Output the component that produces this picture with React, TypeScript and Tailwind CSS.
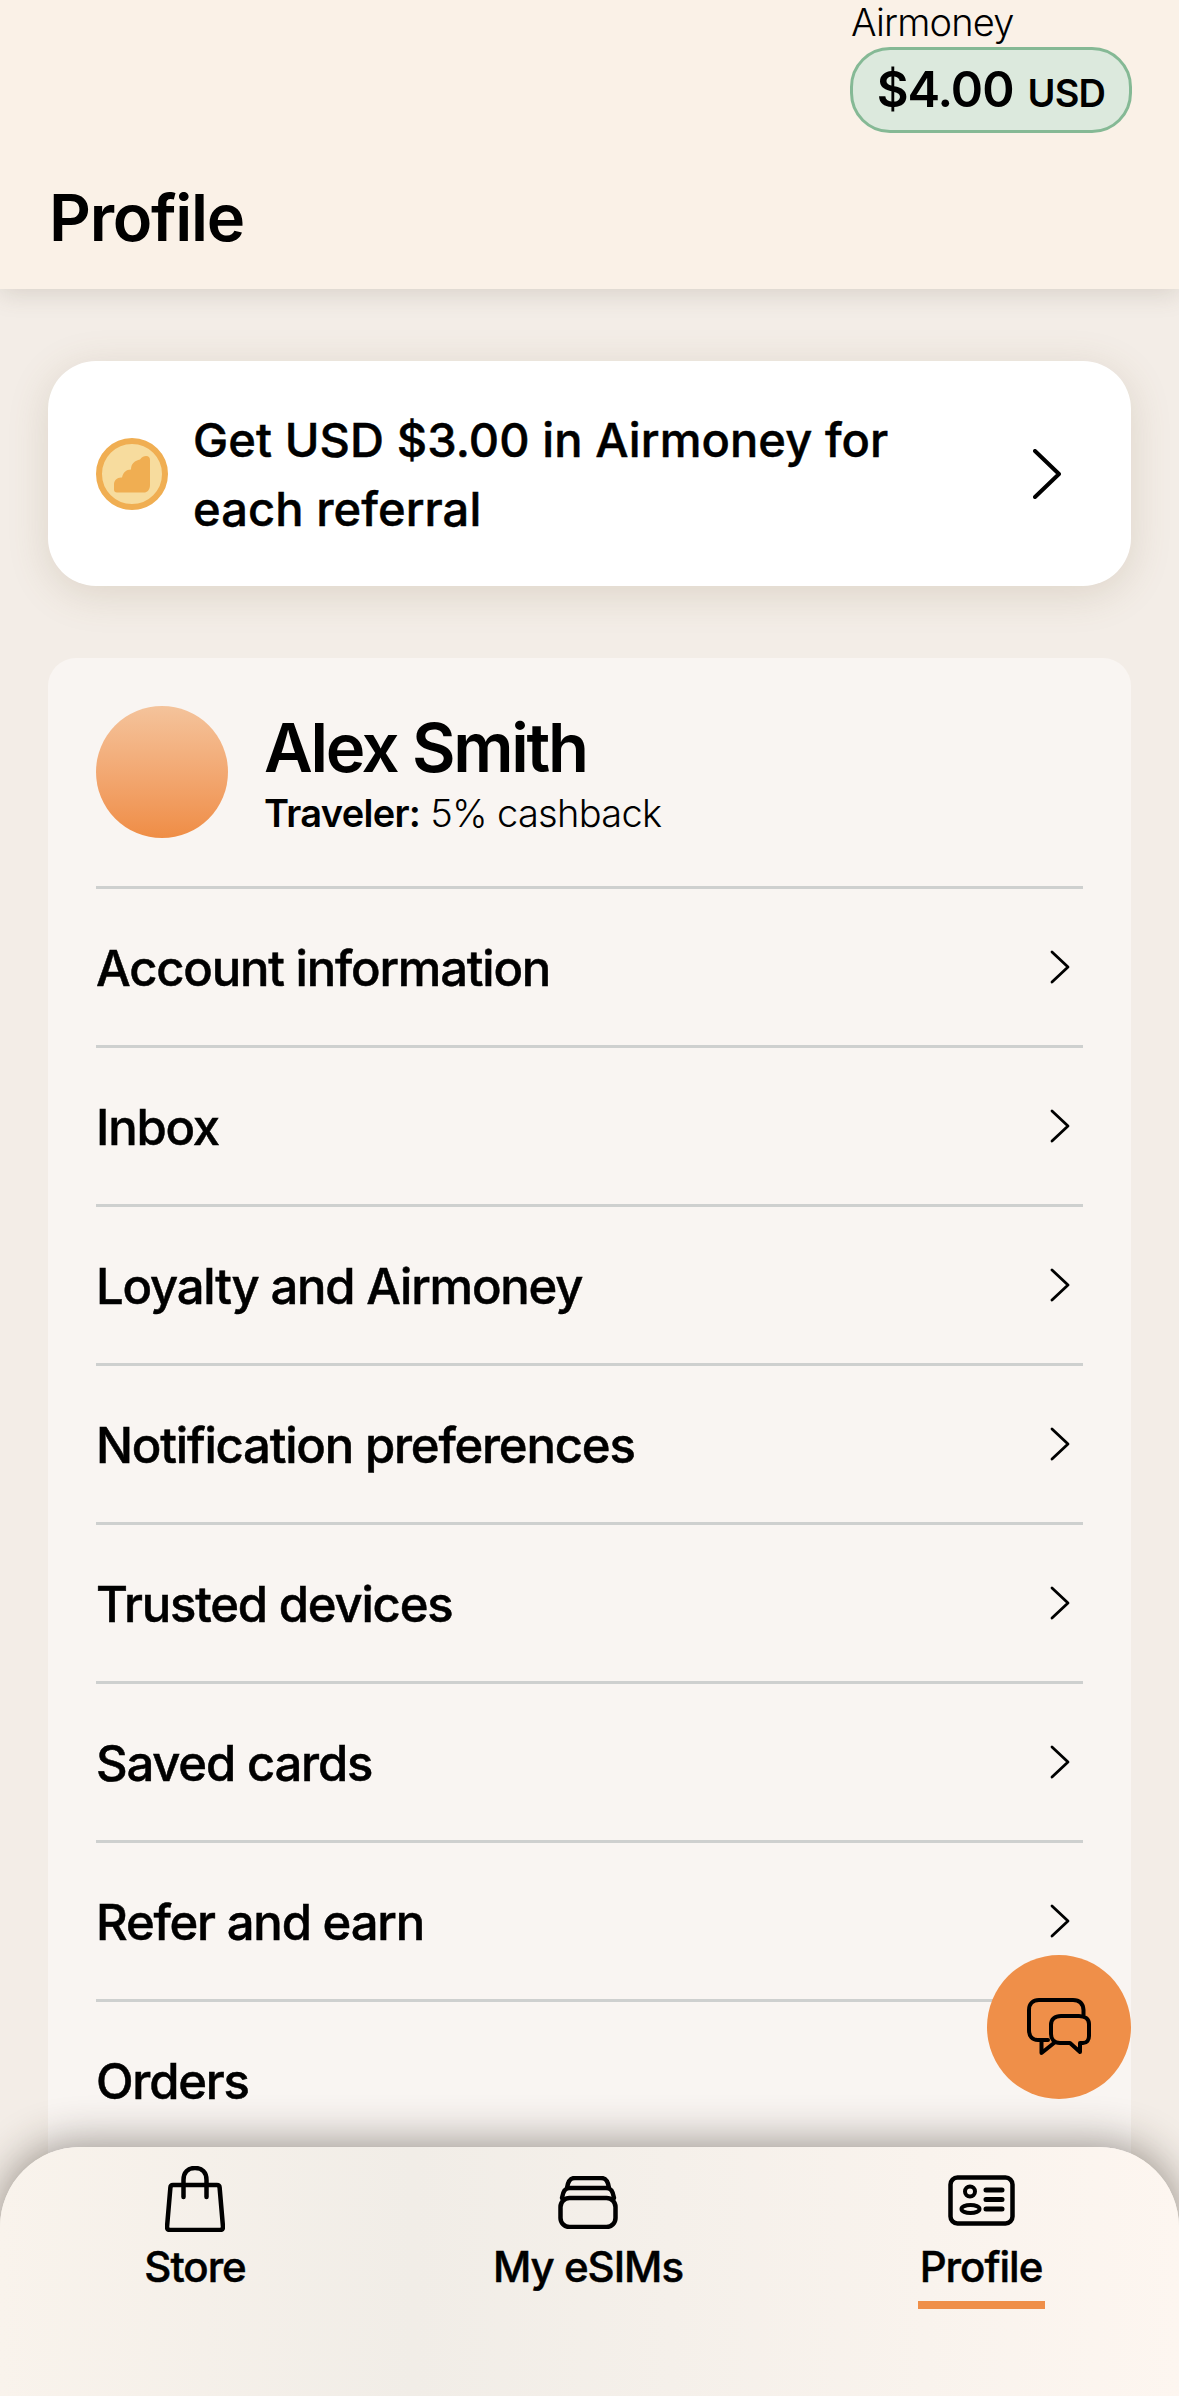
const rows = [
  'Account information',
  'Inbox',
  'Loyalty and Airmoney',
  'Notification preferences',
  'Trusted devices',
  'Saved cards',
  'Refer and earn',
];

function CoinIcon() {
  return (
    <svg viewBox="0 0 72 72" className="h-[72px] w-[72px] shrink-0">
      <circle cx="36" cy="36" r="33" fill="#f7dc9e" stroke="#f0ae52" strokeWidth="6" />
      <path
        d="M21 54.500a3 3 0 0 1-3-3v-5c0-4 3-7 7-7h1c1-5 4-8 9-8 0-6 4-9 9-10 2-3 4-3.500 6-3.500 3 0 4 2 4 4v25c0 5-3 7.500-6 7.500z"
        fill="#f0ae52"
      />
    </svg>
  );
}

function ChatIcon() {
  return (
    <svg viewBox="0 0 64 58" fill="none" stroke="#000" strokeWidth="4" strokeLinecap="round" strokeLinejoin="round" className="h-[58px] w-[64px]">
      <path d="M21 42H11C5 42 2 38 2 32V12C2 6 6 2 12 2h34c6 0 10 3 10.500 10v5" />
      <path d="M14.500 42v13L27 45" />
      <path d="M34 18h18c6 0 10 3 10 8v12c0 4-2 7-6 7h-3v9L43 45H33c-6 0-9-4-9-9v-9c0-6 4-9 10-9z" />
    </svg>
  );
}

function BagIcon() {
  return (
    <svg viewBox="0 0 60 66" fill="none" stroke="#000" strokeWidth="4.500" strokeLinecap="round" strokeLinejoin="round" className="h-[66px] w-[60px]">
      <path d="M8 19h44c1.500 0 2.500 1 2.600 2.500L58 61c0 2-1 3-3 3H5c-2 0-3-1-3-3l3.400-39.500C5.500 20 6.500 19 8 19z" />
      <path d="M18.500 31V14C18.500 6 23 2 30 2s11.500 4 11.500 12v17" />
    </svg>
  );
}

function CardsIcon() {
  return (
    <svg viewBox="0 0 60 53" fill="none" stroke="#000" strokeWidth="4.500" strokeLinecap="round" strokeLinejoin="round" className="mb-[3px] h-[53px] w-[60px]">
      <rect x="2.500" y="22" width="55" height="29" rx="9" />
      <path d="M4 22c1-7 3-10 8-10h36c5 0 7 3 8 10" />
      <path d="M9 12c1-7 3-10 8-10h26c5 0 7 3 8 10" />
    </svg>
  );
}

function IdIcon() {
  return (
    <svg viewBox="0 0 67 51" fill="none" stroke="#000" strokeWidth="4.500" strokeLinecap="round" strokeLinejoin="round" className="mb-[6px] h-[51px] w-[67px]">
      <rect x="2.500" y="2.500" width="62" height="46" rx="7" />
      <circle cx="22" cy="16.500" r="5" strokeWidth="4" />
      <ellipse cx="22.500" cy="34" rx="9" ry="4" strokeWidth="4" />
      <path d="M38 15h16M38 24.500h16M38 34h16" strokeWidth="5" />
    </svg>
  );
}

function NavItem({ label, icon, active }: { label: string; icon: React.ReactNode; active?: boolean }) {
  return (
    <div className="flex w-[240px] flex-col items-center">
      <div className="flex h-[68px] items-end">{icon}</div>
      <span className="mt-[10px] text-[42px] font-medium leading-[50px] tracking-[-1px] text-black [-webkit-text-stroke:0.5px_#000]">{label}</span>
      {active && <span className="mt-[9px] h-2 w-[127px] bg-[#ef8f49]" />}
    </div>
  );
}

export default function App() {
  return (
    <div className="relative flex h-[2396px] w-[1179px] flex-col overflow-hidden bg-[#f3ede7] font-['Inter',sans-serif] text-black">
      <header className="relative z-10 h-[289px] shrink-0 bg-[#faf1e7] shadow-[0_4px_24px_rgba(90,80,60,0.18)]">
        <div className="ml-auto w-[329px] pr-[47px]">
          <p className="pl-[1px] text-[38px] font-light leading-[44px] tracking-[-0.8px]">Airmoney</p>
          <div className="mt-[3px] flex h-[86px] w-[282px] items-center justify-center rounded-[40px] border-[3px] border-[#85b995] bg-[#dce9dd]">
            <span className="text-[49px] font-semibold tracking-[-1px]">$4.00</span>
            <span className="ml-[14px] mt-[6px] text-[38px] font-semibold tracking-[-0.8px]">USD</span>
          </div>
        </div>
        <h1 className="ml-[49px] mt-[46px] text-[65px] font-semibold leading-[78px] tracking-[-1.300px]">Profile</h1>
      </header>

      <main className="min-h-0 flex-1 overflow-hidden px-[48px] pt-[72px]">
        <section className="flex h-[225px] items-center rounded-[48px] bg-white pl-[48px] pr-[70px] shadow-[0_8px_40px_rgba(120,100,60,0.18)]">
          <CoinIcon />
          <p className="ml-[25px] flex-1 pr-[60px] text-[47px] font-medium leading-[69px] tracking-[0.1px] [-webkit-text-stroke:0.5px_#000]">
            Get USD $3.00 in Airmoney for each referral
          </p>
          <svg viewBox="0 0 28 50" fill="none" stroke="#000" strokeWidth="4" strokeLinecap="round" strokeLinejoin="round" className="h-[50px] w-[28px] shrink-0">
            <path d="M2 2l24 23L2 48" />
          </svg>
        </section>

        <section className="mt-[72px] rounded-t-[28px] bg-[#f9f5f2] px-[48px] pt-[48px] pb-[100px]">
          <div className="flex items-center pb-[48px]">
            <div className="h-[132px] w-[132px] rounded-full bg-gradient-to-b from-[#f4c39b] to-[#ef8d45]" />
            <div className="ml-[36px] pt-[2px]">
              <p className="text-[67px] font-semibold leading-[76px] tracking-[-2.300px]">Alex Smith</p>
              <p className="pt-[4px] text-[38px] font-light leading-[46px] tracking-[-0.7px]">
                <span className="font-semibold">Traveler:</span> 5% cashback
              </p>
            </div>
          </div>
          {rows.map((row) => (
            <div key={row} className="flex h-[159px] items-center justify-between border-t-[3px] border-[#ced0cf]">
              <span className="pt-[3px] text-[49px] font-medium tracking-[-1.200px] [-webkit-text-stroke:0.5px_#000]">{row}</span>
              <svg viewBox="0 0 20 34" fill="none" stroke="#000" strokeWidth="2.800" strokeLinecap="round" strokeLinejoin="round" className="mr-[13px] h-[34px] w-[20px]">
                <path d="M2 2l16 15L2 32" />
              </svg>
            </div>
          ))}
          <div className="flex h-[159px] items-center border-t-[3px] border-[#ced0cf]">
            <span className="pt-[3px] text-[49px] font-medium tracking-[-1.200px] [-webkit-text-stroke:0.5px_#000]">Orders</span>
          </div>
        </section>
      </main>

      <button type="button" className="absolute left-[987px] top-[1955px] z-10 flex h-[144px] w-[144px] items-center justify-center rounded-full bg-[#ef8f49]">
        <ChatIcon />
      </button>

      <nav className="absolute inset-x-0 bottom-0 z-20 flex h-[249px] justify-between rounded-t-[80px] bg-gradient-to-r from-[#f9f3ec] via-[#f1ede7] via-35% to-[#fdf6f0] pl-[75px] pr-[78px] pt-[17px] shadow-[0_-4px_44px_rgba(50,40,30,0.48)]">
        <NavItem label="Store" icon={<BagIcon />} />
        <NavItem label="My eSIMs" icon={<CardsIcon />} />
        <NavItem label="Profile" icon={<IdIcon />} active />
      </nav>
    </div>
  );
}
